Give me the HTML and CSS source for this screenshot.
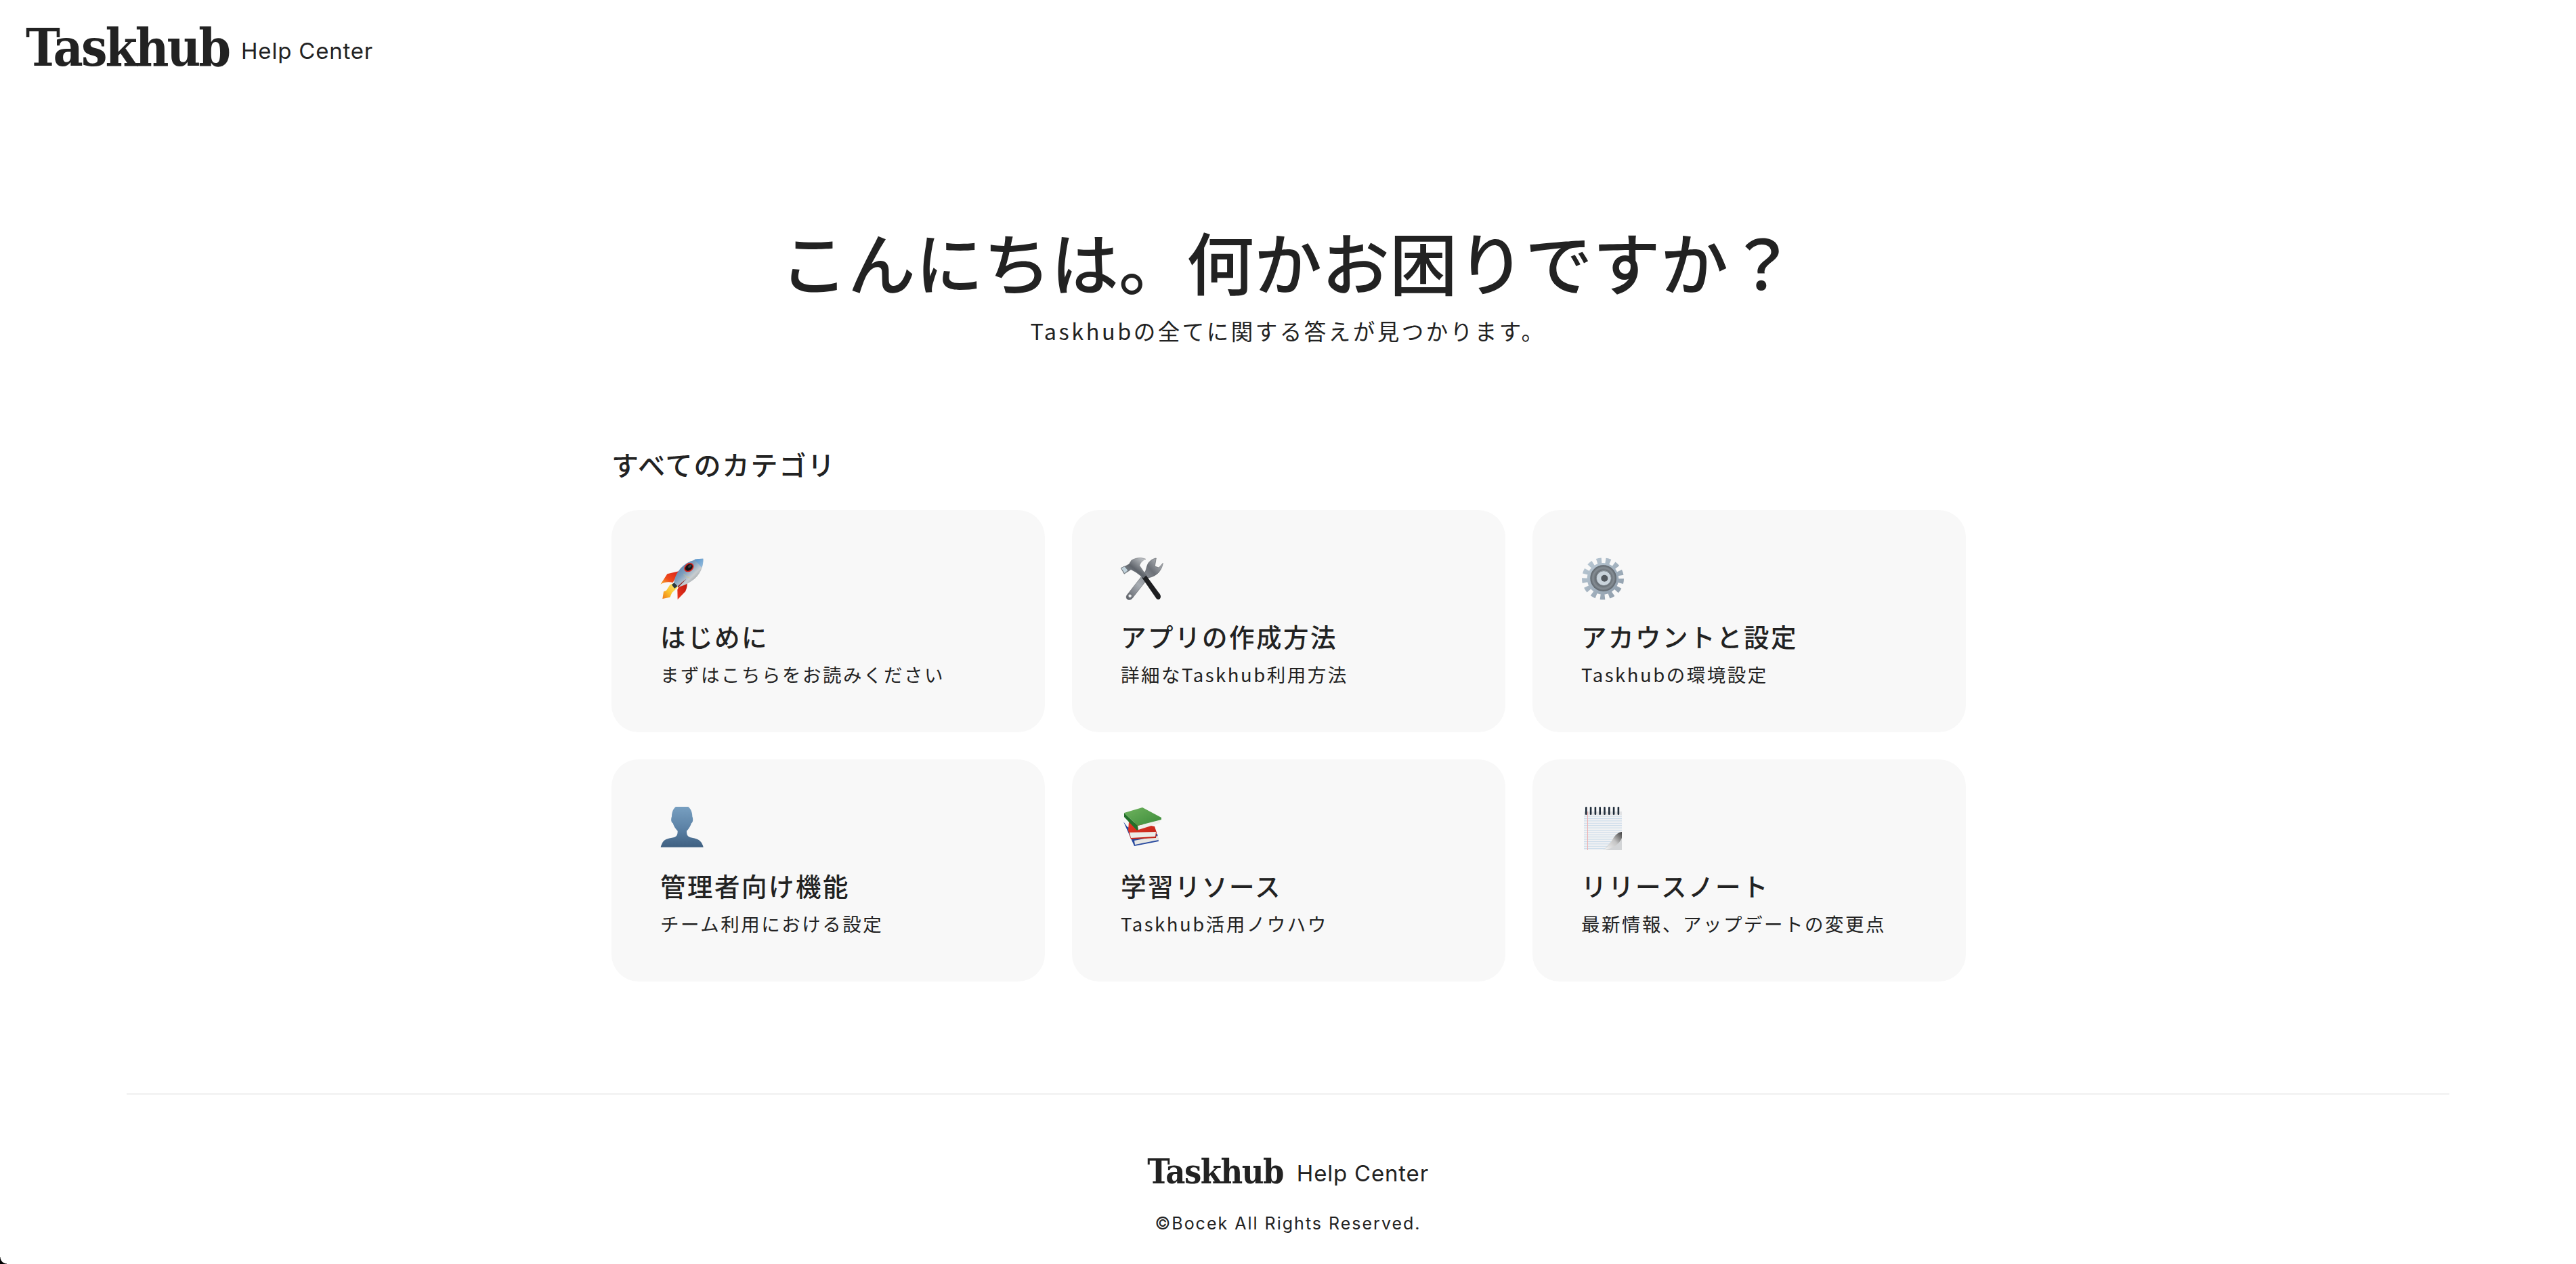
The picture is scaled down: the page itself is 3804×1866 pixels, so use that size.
FILE: index.html
```html
<!DOCTYPE html>
<html lang="ja">
<head>
<meta charset="utf-8">
<title>Taskhub Help Center</title>
<link rel="stylesheet" href="styles.css">
</head>
<body>
<div class="page">
  <header class="header">
    <a class="brand" href="#"><span class="wordmark">Taskhub</span><span class="brand-sub">Help Center</span></a>
  </header>
  <section class="hero">
    <h1 class="hero-title">こんにちは。何かお困りですか？</h1>
    <p class="hero-sub">Taskhubの全てに関する答えが見つかります。</p>
  </section>
  <main class="categories">
    <h2 class="categories-title">すべてのカテゴリ</h2>
    <div class="grid">
      <a class="card" href="#">
        <svg class="icon" viewBox="45 39 192 192">
          <defs>
            <linearGradient id="finL" x1="1" y1="0" x2="0" y2="1"><stop offset="0" stop-color="#d8201a"/><stop offset=".6" stop-color="#ef4a1c"/><stop offset="1" stop-color="#f7b52c"/></linearGradient>
            <linearGradient id="finR" x1="1" y1="0" x2="0" y2="1"><stop offset="0" stop-color="#b5150f"/><stop offset="1" stop-color="#f0351c"/></linearGradient>
            <linearGradient id="flame" x1="1" y1="0" x2="0" y2="1"><stop offset="0" stop-color="#fff27a"/><stop offset=".6" stop-color="#fbbf2a"/><stop offset="1" stop-color="#ef7a1a"/></linearGradient>
            <linearGradient id="hull" x1="0" y1="0" x2="1" y2="1"><stop offset="0" stop-color="#2f69a6"/><stop offset=".42" stop-color="#7f9fbd"/><stop offset=".62" stop-color="#c8cdd0"/><stop offset="1" stop-color="#5f6465"/></linearGradient>
            <linearGradient id="nose" x1="0" y1="0" x2="1" y2="1"><stop offset="0" stop-color="#4f8fc9"/><stop offset="1" stop-color="#9cc0de"/></linearGradient>
          </defs>
          <path d="M130 99 L76 112 L46 158 C66 146 84 146 101 150 Z" fill="url(#finL)"/>
          <path d="M161 133 C140 150 128 165 121 182 L122 225 L156 190 C166 170 166 150 161 133 Z" fill="url(#finR)"/>
          <path d="M112 150 L88 160 L72 185 L60 190 L55 222 L88 215 L97 195 L122 172 Z" fill="url(#flame)"/>
          <path d="M96 160 L110 148 L124 164 L108 176 Z" fill="#2d3a40"/>
          <path d="M106 150 C112 100 156 46 235 44 C238 106 195 150 126 170 Z" fill="url(#hull)"/>
          <path d="M196 47 C212 44 224 44 235 44 C236 58 234 72 229 85 C218 70 206 58 196 47 Z" fill="url(#nose)"/>
          <path d="M122 167 C130 160 138 150 160 134 L124 172 Z" fill="#8e1610"/>
          <path d="M148 112 C160 124 168 128 176 130" stroke="#d8c878" stroke-width="2" fill="none"/>
          <ellipse cx="172" cy="83" rx="23" ry="18" transform="rotate(-38 172 83)" fill="#d9231c"/>
          <ellipse cx="172" cy="83" rx="18" ry="13" transform="rotate(-38 172 83)" fill="#131416"/>
          <ellipse cx="176" cy="78" rx="9" ry="5" transform="rotate(-38 176 78)" fill="#3b4147"/>
        </svg>
        <h3 class="card-title">はじめに</h3>
        <p class="card-text">まずはこちらをお読みください</p>
      </a>
      <a class="card" href="#">
        <svg class="icon" viewBox="45 39 192 192">
          <defs>
            <linearGradient id="steel" x1="0" y1="1" x2="1" y2="0"><stop offset="0" stop-color="#5b5f66"/><stop offset=".35" stop-color="#a8adb3"/><stop offset=".7" stop-color="#6d7178"/><stop offset="1" stop-color="#c5c9cd"/></linearGradient>
            <linearGradient id="hammer" x1="0" y1="1" x2="1" y2="0"><stop offset="0" stop-color="#9ca3ab"/><stop offset=".5" stop-color="#5f646b"/><stop offset="1" stop-color="#d3d6d9"/></linearGradient>
          </defs>
          <path d="M72 206 C66 216 72 228 86 226 C94 224 98 218 102 212 L168 128 C186 126 204 116 214 104 C224 92 230 78 232 64 L214 84 L196 78 L202 42 C186 44 170 56 164 70 C158 84 158 96 152 104 Z" fill="url(#steel)" stroke="#44484e" stroke-width="1.5"/>
          <circle cx="86" cy="209" r="8" fill="#eceef0" stroke="#4b4f55" stroke-width="2"/>
          <path d="M118 98 L142 134 L145 132 L131 92 Z" fill="#8d9198"/>
          <path d="M139 128 L202 220 C208 228 222 226 222 212 C222 206 218 200 214 196 L157 118 Z" fill="#1d1e20"/>
          <path d="M112 104 L146 130 L158 118 L128 74 C136 56 146 50 156 46 C138 38 112 38 92 52 L82 68 L68 76 L46 86 L60 112 L82 98 L90 92 Z" fill="url(#hammer)" stroke="#494d53" stroke-width="1"/>
          <path d="M46 86 L62 78 L78 96 L62 110 Z" fill="#c2d3dc" stroke="#555a60" stroke-width="2"/>
        </svg>
        <h3 class="card-title">アプリの作成方法</h3>
        <p class="card-text">詳細なTaskhub利用方法</p>
      </a>
      <a class="card" href="#">
        <svg class="icon" viewBox="45 39 192 192">
          <defs>
            <linearGradient id="gearBody" x1="0" y1="0" x2="1" y2="1"><stop offset="0" stop-color="#b8c7d3"/><stop offset="1" stop-color="#8f9dab"/></linearGradient>
            <radialGradient id="gearRing"><stop offset=".4" stop-color="#4d5359"/><stop offset=".8" stop-color="#858d94"/><stop offset="1" stop-color="#5a6168"/></radialGradient>
          </defs>
          <circle cx="141" cy="133" r="78" fill="none" stroke="url(#gearBody)" stroke-width="30" stroke-dasharray="20 17.7"/>
          <circle cx="141" cy="133" r="70" fill="url(#gearBody)"/>
          <circle cx="143" cy="131" r="58" fill="url(#gearRing)"/>
          <circle cx="145" cy="130" r="33" fill="#c9d3db"/>
          <ellipse cx="145" cy="131" rx="33" ry="33" fill="none" stroke="#7a838b" stroke-width="3"/>
          <circle cx="148" cy="131" r="15" fill="#53595f"/>
        </svg>
        <h3 class="card-title">アカウントと設定</h3>
        <p class="card-text">Taskhubの環境設定</p>
      </a>
      <a class="card" href="#">
        <svg class="icon" viewBox="45 39 192 192">
          <defs>
            <linearGradient id="bust" x1="0" y1="0" x2="0" y2="1"><stop offset="0" stop-color="#7aa2c3"/><stop offset=".55" stop-color="#5c82a6"/><stop offset="1" stop-color="#3f6081"/></linearGradient>
          </defs>
          <path d="M141 30 C112 30 96 52 96 82 C92 92 92 108 101 112 C106 128 114 138 122 146 C122 160 120 168 108 174 C88 178 66 180 56 196 C52 204 48 212 47 218 L236 218 C234 210 230 202 226 196 C214 180 194 178 176 174 C164 168 162 160 162 146 C170 138 178 128 183 112 C191 108 191 92 187 82 C187 52 170 30 141 30 Z" fill="url(#bust)"/>
        </svg>
        <h3 class="card-title">管理者向け機能</h3>
        <p class="card-text">チーム利用における設定</p>
      </a>
      <a class="card" href="#">
        <svg class="icon" viewBox="0 0 64 64">
          <defs>
            <linearGradient id="green" x1="0" y1="0" x2="1" y2="1"><stop offset="0" stop-color="#6fb35e"/><stop offset="1" stop-color="#3c8b3a"/></linearGradient>
            <linearGradient id="red" x1="0" y1="0" x2="1" y2="1"><stop offset="0" stop-color="#e63a28"/><stop offset="1" stop-color="#bc1f15"/></linearGradient>
          </defs>
          <path d="M4 22 L20 58 L56 51 L54 40 L10 30 Z" fill="#27499e"/>
          <path d="M20 50 L55 43 L56 49 L21 56 Z" fill="#e7e7e4"/>
          <path d="M12 22 L50 29 L53 38 L52 46 L15 48 L11 35 Z" fill="url(#red)"/>
          <path d="M13 38 L52 37 L51 44 L15 46 Z" fill="#ecebe7"/>
          <path d="M5 9 L5 15 L24 35 L27 33 L25 28 Z" fill="#23702a"/>
          <path d="M25 28 L58 20 L58 24 L26 34 Z" fill="#f0efea"/>
          <path d="M5 9 L32 1 L60 16 L60 19 L25 28 Z" fill="url(#green)"/>
        </svg>
        <h3 class="card-title">学習リソース</h3>
        <p class="card-text">Taskhub活用ノウハウ</p>
      </a>
      <a class="card" href="#">
        <svg class="icon" viewBox="0 0 64 64">
          <defs>
            <pattern id="ruled" width="56" height="3.4" patternUnits="userSpaceOnUse"><rect width="56" height="3.4" fill="#f1f2f4"/><rect width="56" height="1" fill="#c6d8e8"/></pattern>
            <linearGradient id="curl" x1="0" y1="1" x2="1" y2="0"><stop offset="0" stop-color="#fafafa"/><stop offset=".55" stop-color="#c4c4c4"/><stop offset="1" stop-color="#3f3f3f"/></linearGradient>
          </defs>
          <rect x="4" y="7" width="56" height="57" fill="url(#ruled)"/>
          <rect x="4" y="7" width="56" height="5" fill="#e2e3e5"/>
          <rect x="9" y="7" width="1" height="57" fill="#eeb0b0"/>
          <path d="M60 37 C52 40 46 50 33 64 L60 64 Z" fill="#d3d5d7"/>
          <path d="M60 37 C54 38 50 42 47 47 C44 53 40 59 33 64 C46 62 56 56 60 46 Z" fill="url(#curl)"/>
          <g fill="#1f2c3a">
            <rect x="6" y="0" width="2.600" height="12" rx="1.300"/><rect x="12.800" y="0" width="2.600" height="12" rx="1.300"/><rect x="19.600" y="0" width="2.600" height="12" rx="1.300"/><rect x="26.400" y="0" width="2.600" height="12" rx="1.300"/><rect x="33.200" y="0" width="2.600" height="12" rx="1.300"/><rect x="40" y="0" width="2.600" height="12" rx="1.300"/><rect x="46.800" y="0" width="2.600" height="12" rx="1.300"/><rect x="53.600" y="0" width="2.600" height="12" rx="1.300"/>
          </g>
        </svg>
        <h3 class="card-title">リリースノート</h3>
        <p class="card-text">最新情報、アップデートの変更点</p>
      </a>
    </div>
  </main>
  <footer class="footer">
    <a class="brand brand-small" href="#"><span class="wordmark">Taskhub</span><span class="brand-sub">Help Center</span></a>
    <p class="copyright">©Bocek All Rights Reserved.</p>
  </footer>
  <div class="window-corner"></div>
</div>
</body>
</html>
```

FILE: styles.css
```css
* { box-sizing: border-box; }
html, body { margin: 0; padding: 0; background: #fff; }
body {
  color: #222;
  font-family: "Noto Sans CJK JP", "Noto Sans", sans-serif;
}
a { color: inherit; text-decoration: none; }
.page {
  position: relative;
  height: 1866px;
  overflow: hidden;
  display: flex;
  flex-direction: column;
}
.header { padding: 26px 0 0 38px; height: 150px; }
.brand { display: inline-flex; align-items: center; gap: 18px; }
.wordmark {
  font-family: "DejaVu Serif", serif;
  font-stretch: condensed;
  font-weight: 700;
  font-size: 76px;
  line-height: 90px;
  letter-spacing: -3px;
}
.brand-sub {
  margin-top: 8px;
  font-family: Inter, "Noto Sans", sans-serif;
  font-size: 33px;
  line-height: 40px;
  letter-spacing: .8px;
}
.hero { text-align: center; margin-top: 170px; }
.hero-title {
  margin: 0;
  font-size: 100px;
  line-height: 130px;
  font-weight: 500;
}
.hero-sub {
  margin: 13px 0 0;
  font-size: 32.5px;
  line-height: 50px;
  letter-spacing: 3.5px;
  font-weight: 400;
}
.categories { width: 2000px; margin: 142px 0 0 903px; }
.categories-title {
  margin: 0 0 38px;
  font-size: 40px;
  line-height: 60px;
  font-weight: 500;
  letter-spacing: 2px;
}
.grid {
  display: grid;
  grid-template-columns: repeat(3, 640px);
  grid-auto-rows: 328px;
  gap: 40px;
}
.card {
  display: block;
  padding: 70px 72px 0;
  background: #f8f8f8;
  border-radius: 40px;
}
.icon { display: block; width: 64px; height: 64px; }
.card-title {
  margin: 24px 0 0;
  font-size: 37.5px;
  line-height: 56px;
  font-weight: 500;
  letter-spacing: 2.500px;
}
.card-text {
  margin: 7px 0 0;
  font-size: 27.5px;
  line-height: 42px;
  letter-spacing: 2.500px;
}
.footer {
  width: 3430px;
  margin: 165px auto 0;
  padding-top: 84px;
  border-top: 2px solid #f0f0f0;
  text-align: center;
}
.brand-small { gap: 20px; }
.brand-small .wordmark { font-size: 50px; line-height: 60px; letter-spacing: -1.500px; }
.brand-small .brand-sub { margin-top: 4px; font-size: 33px; letter-spacing: .8px; }
.copyright {
  margin: 28px 0 0;
  font-family: Inter, "Noto Sans", sans-serif;
  font-size: 25px;
  line-height: 36px;
  letter-spacing: 2px;
}
.window-corner {
  position: absolute;
  left: 0;
  bottom: 0;
  width: 10px;
  height: 10px;
  background: radial-gradient(circle at 100% 0, transparent 9px, #000 10px);
}
```
